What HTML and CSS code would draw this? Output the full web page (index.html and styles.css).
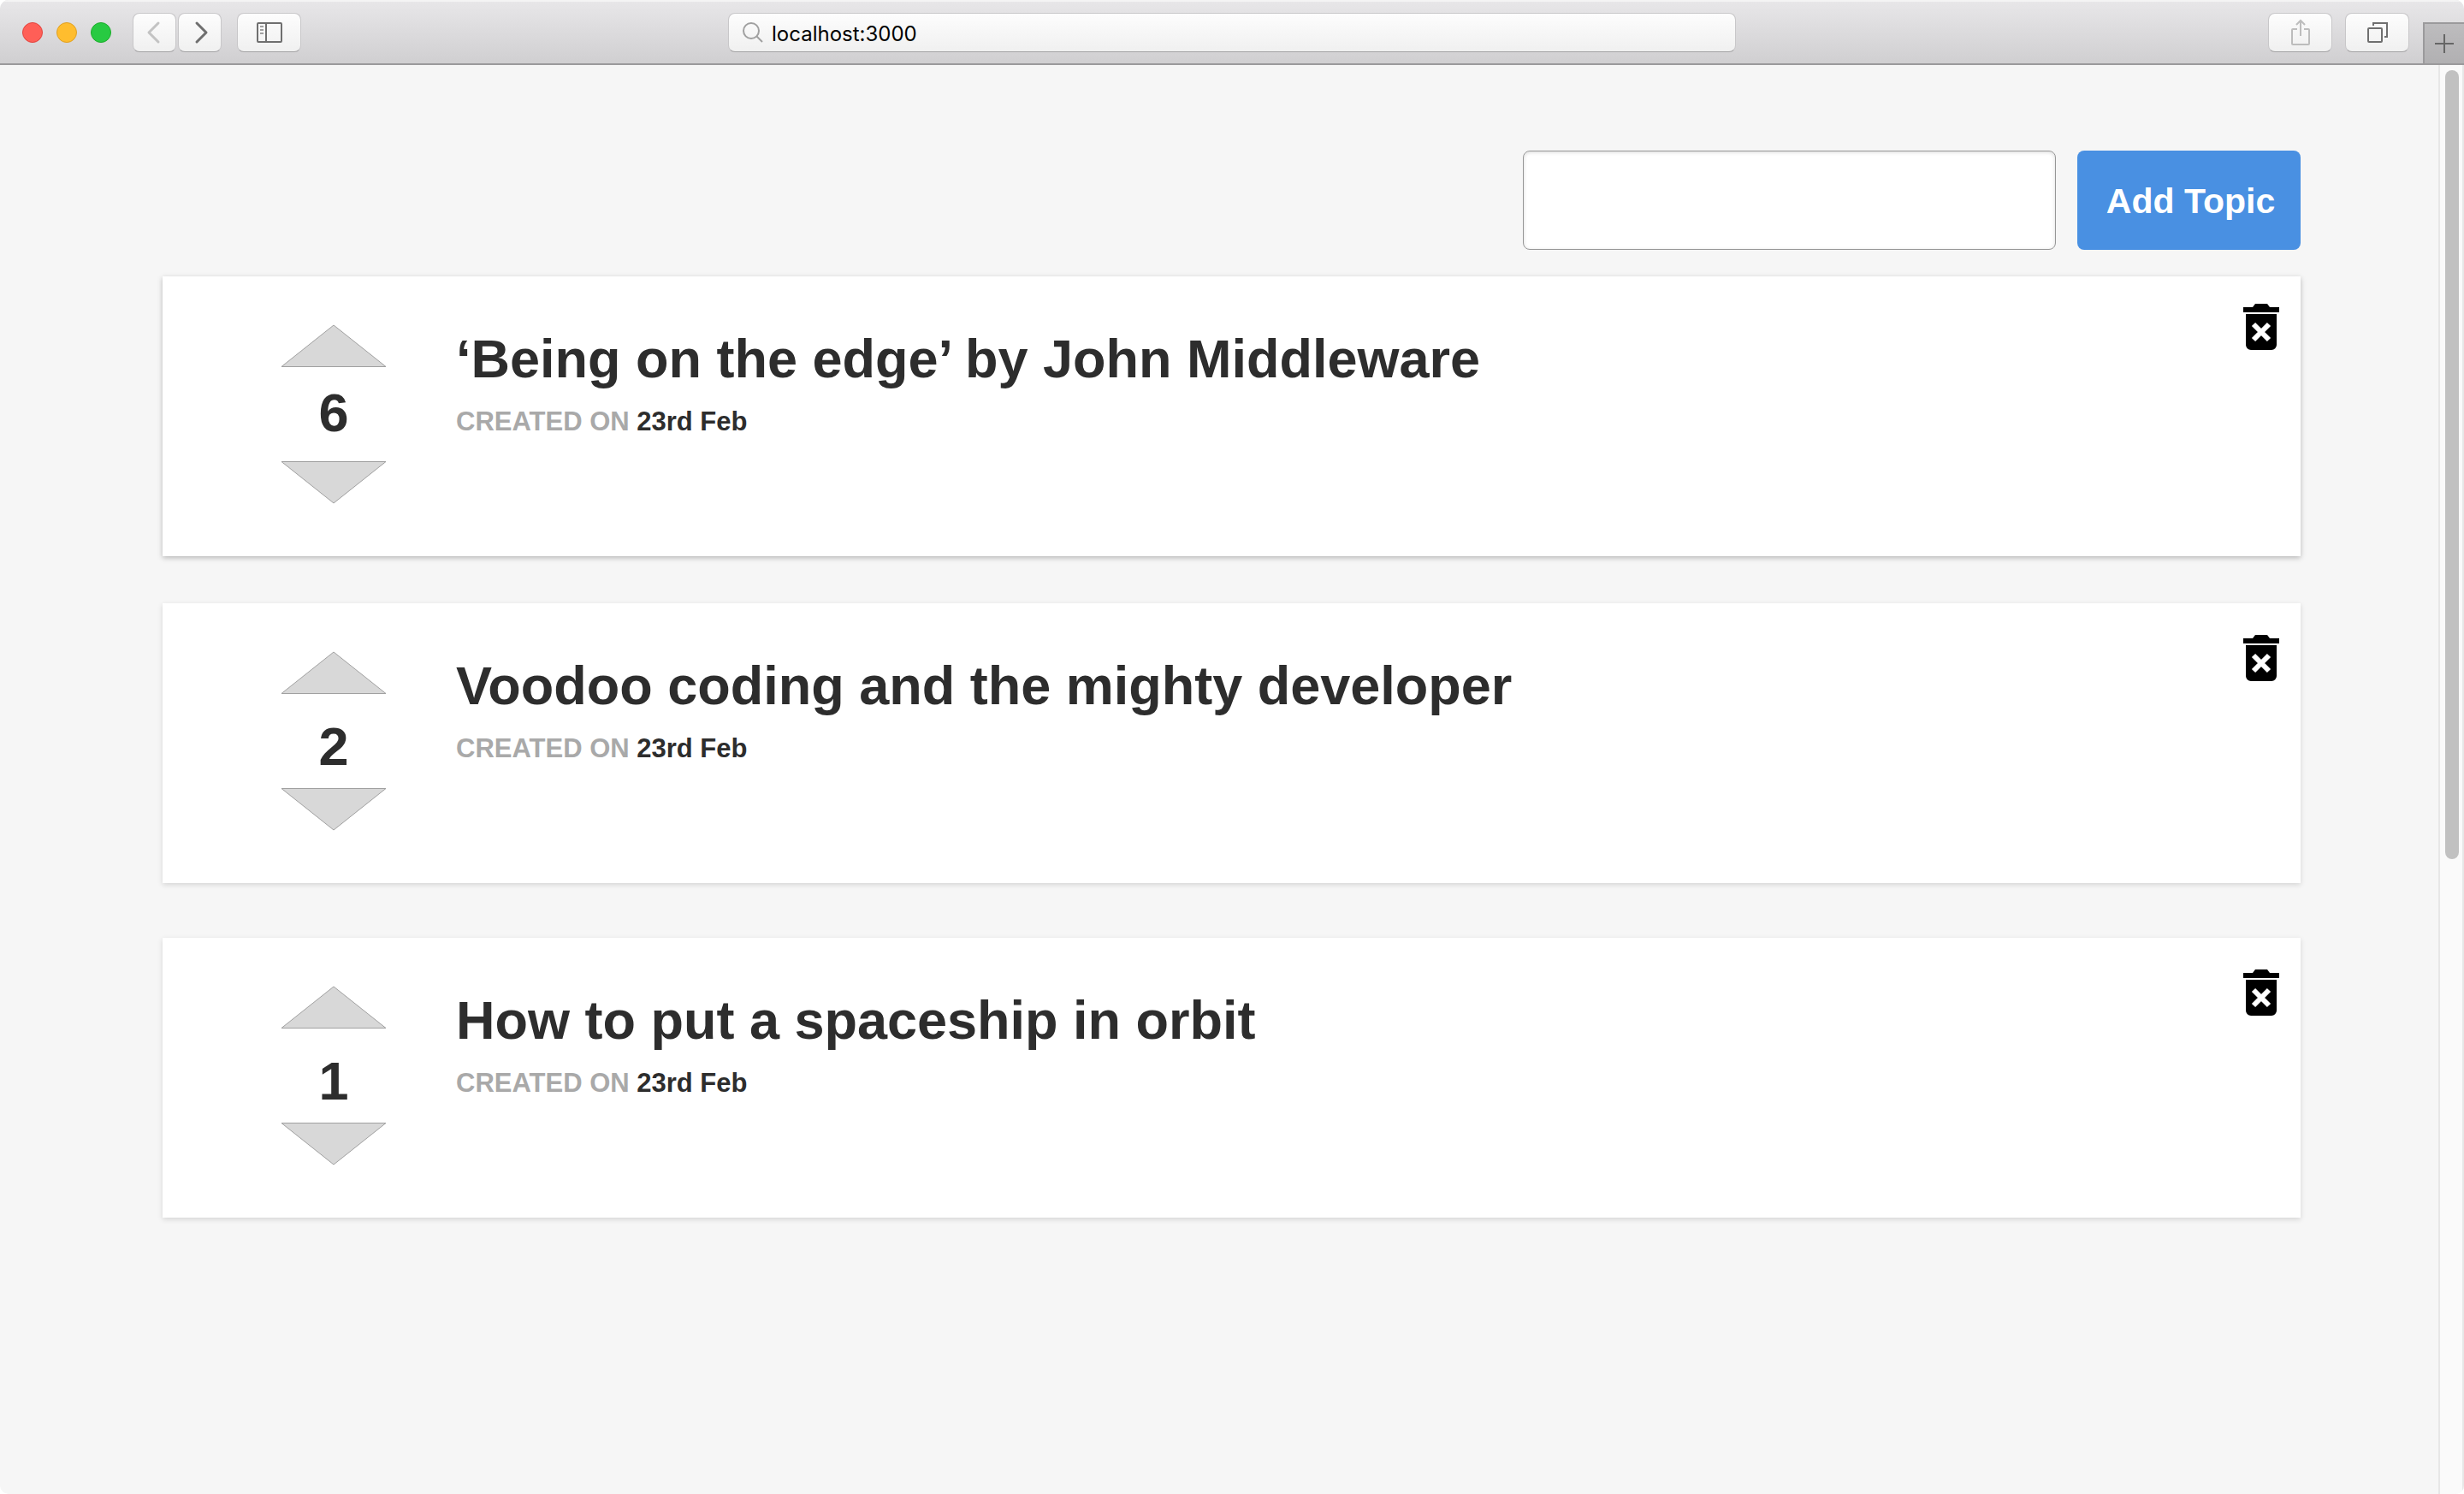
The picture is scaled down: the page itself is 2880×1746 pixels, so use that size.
FILE: index.html
```html
<!DOCTYPE html>
<html lang="en">
<head>
<meta charset="utf-8">
<title>Topics</title>
<link rel="stylesheet" href="styles.css">
</head>
<body>
<svg class="sprite" aria-hidden="true">
  <symbol id="up" viewBox="0 0 124 51"><path d="M1 49.500 62 1l61 48.500z"/></symbol>
  <symbol id="down" viewBox="0 0 124 51"><path d="M1 1.500h122L62 50z"/></symbol>
  <symbol id="trash" viewBox="0 0 44 56"><path d="M1 4h11l3-4h14l3 4h11v6H1zM4 12h36v36a6 6 0 0 1-6 6H10a6 6 0 0 1-6-6z"/><path class="cross" d="m13 24 18 18m0-18L13 42"/></symbol>
</svg>
<div class="window">
  <header class="toolbar">
    <div class="lights"><span class="light red"></span><span class="light yellow"></span><span class="light green"></span></div>
    <div class="history">
      <button class="tool back" aria-label="Back"><svg width="16" height="26" viewBox="0 0 16 26"><path d="M14 2 3 13l11 11"/></svg></button>
      <button class="tool forward" aria-label="Forward"><svg width="16" height="26" viewBox="0 0 16 26"><path d="m2 2 11 11L2 24"/></svg></button>
    </div>
    <button class="tool wide" aria-label="Sidebar"><svg width="30" height="24" viewBox="0 0 30 24"><rect x="1" y="1" width="28" height="22" rx="1"/><path d="M11 1v22"/><path class="faint" d="M4 5h4M4 9h4M4 13h4"/></svg></button>
    <label class="address">
      <svg width="24" height="24" viewBox="0 0 24 24"><circle cx="10" cy="10" r="9"/><path d="m16 16 7 7"/></svg>
      <input type="text" aria-label="Address" value="localhost:3000">
    </label>
    <button class="tool wide share" aria-label="Share"><svg width="24" height="32" viewBox="0 0 24 32"><path d="M8 12H3a1 1 0 0 0-1 1v16a1 1 0 0 0 1 1h18a1 1 0 0 0 1-1V13a1 1 0 0 0-1-1h-5M12 20V2M7 7l5-5 5 5"/></svg></button>
    <button class="tool wide tabs" aria-label="Show all tabs"><svg width="24" height="24" viewBox="0 0 24 24"><rect x="1" y="7" width="16" height="16" rx="1"/><path d="M7 4V1h16v16h-3"/></svg></button>
    <button class="new-tab" aria-label="New tab"><svg width="22" height="22" viewBox="0 0 22 22"><path d="M11 0v22M0 11h22"/></svg></button>
  </header>
  <div class="viewport">
    <main class="page">
      <form class="add-form">
        <input class="topic-input" type="text" aria-label="Topic">
        <button class="add-button" type="button">Add Topic</button>
      </form>
      <article class="card first">
        <div class="votes">
          <button class="vote" aria-label="Vote up"><svg><use href="#up"/></svg></button>
          <span class="count">6</span>
          <button class="vote" aria-label="Vote down"><svg><use href="#down"/></svg></button>
        </div>
        <div class="details">
          <h2>‘Being on the edge’ by John Middleware</h2>
          <p><span class="muted">CREATED ON</span> 23rd Feb</p>
        </div>
        <button class="delete" aria-label="Delete"><svg><use href="#trash"/></svg></button>
      </article>
      <article class="card">
        <div class="votes">
          <button class="vote" aria-label="Vote up"><svg><use href="#up"/></svg></button>
          <span class="count">2</span>
          <button class="vote" aria-label="Vote down"><svg><use href="#down"/></svg></button>
        </div>
        <div class="details">
          <h2>Voodoo coding and the mighty developer</h2>
          <p><span class="muted">CREATED ON</span> 23rd Feb</p>
        </div>
        <button class="delete" aria-label="Delete"><svg><use href="#trash"/></svg></button>
      </article>
      <article class="card">
        <div class="votes">
          <button class="vote" aria-label="Vote up"><svg><use href="#up"/></svg></button>
          <span class="count">1</span>
          <button class="vote" aria-label="Vote down"><svg><use href="#down"/></svg></button>
        </div>
        <div class="details">
          <h2>How to put a spaceship in orbit</h2>
          <p><span class="muted">CREATED ON</span> 23rd Feb</p>
        </div>
        <button class="delete" aria-label="Delete"><svg><use href="#trash"/></svg></button>
      </article>
    </main>
    <div class="scrollbar"><div class="thumb"></div></div>
  </div>
</div>
</body>
</html>
```
FILE: styles.css
```css
* { box-sizing: border-box; }
body {
  margin: 0;
  background: #fff;
  color: #2d2d2d;
  font-family: "Liberation Sans", Arial, sans-serif;
}
button { margin: 0; padding: 0; border: 0; background: none; font: inherit; cursor: pointer; }
svg { display: block; fill: none; }
.sprite { position: absolute; width: 0; height: 0; }

.window {
  display: flex;
  flex-direction: column;
  min-height: 100vh;
  overflow: hidden;
  border-radius: 10px;
  background: #f6f6f6;
}

/* Browser toolbar */
.toolbar {
  display: flex;
  align-items: flex-start;
  height: 76px;
  padding: 15px 0 0 26px;
  border-bottom: 2px solid #9b9a9c;
  background: linear-gradient(#e8e7e9, #d0cfd1);
  box-shadow: inset 0 2px 0 #f4f4f4;
}
.lights { display: flex; gap: 16px; padding-top: 11px; }
.light { width: 24px; height: 24px; border: 1px solid; border-radius: 50%; }
.red { border-color: #e2443f; background: #ff5f57; }
.yellow { border-color: #dfa023; background: #ffbd2e; }
.green { border-color: #1dad2b; background: #28ca42; }
.history { display: flex; gap: 2px; margin: 0 18px 0 25px; }
.tool, .address {
  display: flex;
  align-items: center;
  justify-content: center;
  height: 46px;
  border: 1px solid #c8c7c9;
  border-bottom-color: #a3a2a4;
  border-radius: 8px;
  background: linear-gradient(#fdfdfd, #f0f0f0);
}
.tool { flex: none; width: 51px; stroke: #6f6f6f; stroke-width: 2; }
.tool svg { overflow: visible; }
.back, .forward { stroke-width: 3; stroke-linecap: round; stroke-linejoin: round; }
.back { padding-right: 4px; stroke: #c3c3c3; }
.forward { padding-left: 4px; }
.wide { width: 75px; }
.faint { stroke: #a0a0a0; }
.share { margin-left: auto; margin-right: 15px; stroke: #bdbdbd; }
.address {
  flex: 0 1 1178px;
  gap: 10px;
  margin-left: 499px;
  padding: 0 16px;
  stroke: #a0a0a0;
  stroke-width: 2;
}
.address svg { flex: none; }
.address input {
  flex: 1;
  min-width: 0;
  padding: 2px 0 0;
  border: 0;
  outline: 0;
  background: none;
  color: #000;
  font: 24px Inter, sans-serif;
}
.new-tab {
  align-self: flex-end;
  display: flex;
  align-items: center;
  justify-content: center;
  width: 48px;
  height: 48px;
  margin-left: 16px;
  border: solid #9b9a9c;
  border-width: 2px 0 0 2px;
  background: linear-gradient(#bdbcbe, #b1b0b2);
  stroke: #666;
  stroke-width: 2;
}

/* Page */
.viewport { display: flex; flex: 1; }
.page { flex: 1; padding: 100px 161px 100px 190px; }
.add-form { display: flex; justify-content: flex-end; gap: 25px; margin-bottom: 31px; }
.topic-input {
  width: 623px;
  height: 116px;
  padding: 0 24px;
  border: 1px solid #979797;
  border-radius: 8px;
  outline: 0;
  background: #fff;
  box-shadow: inset 0 1px 4px rgba(0, 0, 0, .15);
  font: 40px "Liberation Sans", Arial, sans-serif;
}
.add-button {
  width: 261px;
  height: 116px;
  padding: 2px 0 0 4px;
  border-radius: 8px;
  background: #4990e2;
  color: #fff;
  font-size: 41px;
  font-weight: 700;
}
.card {
  display: flex;
  align-items: flex-start;
  min-height: 327px;
  margin-bottom: 64px;
  padding: 56px 24px 56px 138px;
  background: #fff;
  box-shadow: 0 2px 6px rgba(0, 0, 0, .14);
}
.card.first { margin-bottom: 55px; box-shadow: 0 2px 6px rgba(0, 0, 0, .26); }
.votes { display: flex; flex-direction: column; align-items: center; width: 124px; margin-right: 81px; }
.vote svg { width: 124px; height: 51px; fill: #d8d8d8; stroke: #a0a0a0; stroke-width: 1; }
.count { height: 108px; padding-top: 6px; font-size: 63px; font-weight: 700; line-height: 108px; }
.first .count { padding-top: 0; line-height: 104px; }
.details { flex: 1; font-weight: 700; }
.details h2 { margin: 0 0 10px; font-size: 63px; line-height: 80px; }
.details p { margin: 0; font-size: 31px; line-height: 48px; }
.muted { color: #a9a9a9; }
.delete { margin-top: -19px; }
.first .delete { margin-top: -24px; }
.delete svg { width: 44px; height: 56px; fill: #000; }
.cross { stroke: #fff; stroke-width: 6; }

/* Scrollbar */
.scrollbar {
  width: 30px;
  padding: 6px 4px 0 6px;
  border: solid #e7e7e7;
  border-width: 0 2px;
  background: #fafafa;
}
.thumb { width: 16px; height: 922px; border-radius: 8px; background: #c1c1c1; }
```
